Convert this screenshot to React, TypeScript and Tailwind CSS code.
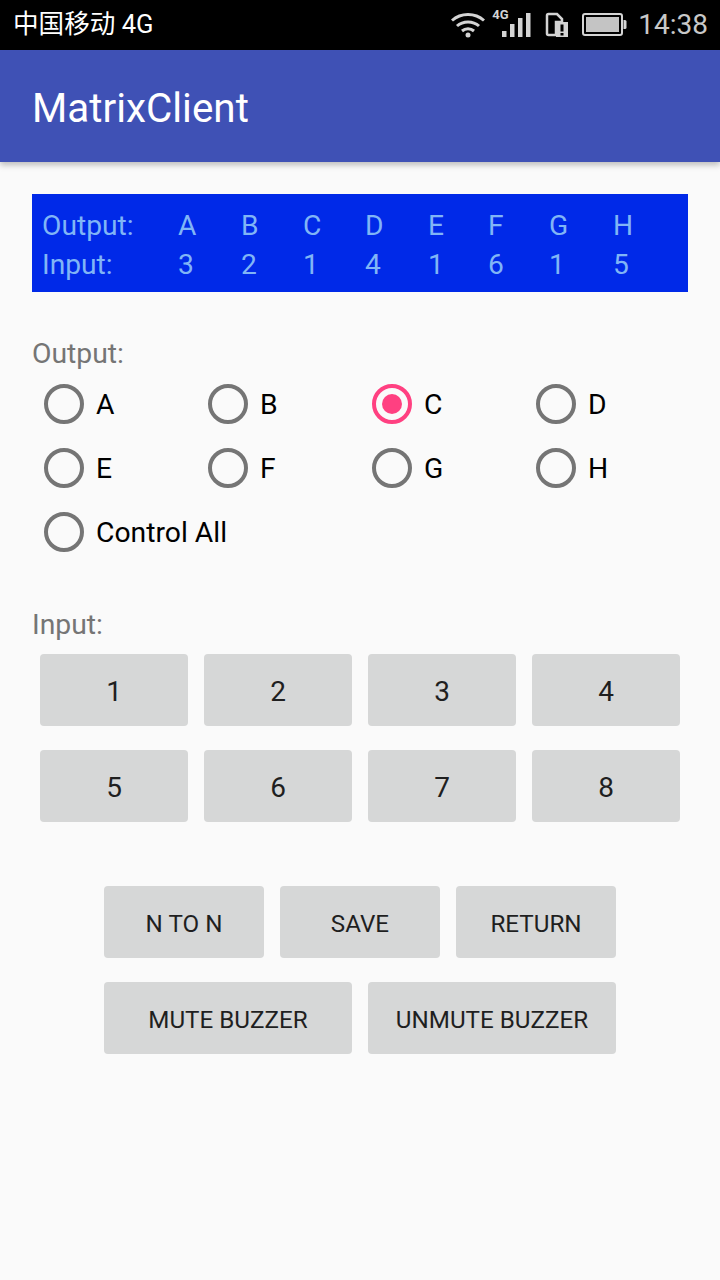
const font = { fontFamily: 'Roboto, "Noto Sans CJK SC", sans-serif' };

const columns = [
  ['A', '3', 'w-[63px]'],
  ['B', '2', 'w-[62px]'],
  ['C', '1', 'w-[62px]'],
  ['D', '4', 'w-[63px]'],
  ['E', '1', 'w-[60px]'],
  ['F', '6', 'w-[61px]'],
  ['G', '1', 'w-[64px]'],
  ['H', '5', 'w-[40px]'],
];

function Radio({ label, checked, className }: { label: string; checked?: boolean; className?: string }) {
  return (
    <div className={`flex h-16 items-center ${className ?? ''}`}>
      <div className="ml-1 flex h-[40px] w-[40px] items-center justify-center">
        <div className={`flex h-[40px] w-[40px] items-center justify-center rounded-full border-[4px] ${checked ? 'border-[#ff4081]' : 'border-[#757575]'}`}>
          {checked && <div className="h-[20px] w-[20px] rounded-full bg-[#ff4081]" />}
        </div>
      </div>
      <span className="ml-3 pt-[2px] text-[28.3px] leading-none text-black">{label}</span>
    </div>
  );
}

function Btn({ label, className }: { label: string; className: string }) {
  return (
    <div className={`flex h-[72px] items-center justify-center rounded-[4px] bg-[#d6d7d7] text-[#1f1f1f] ${className}`}>
      {label}
    </div>
  );
}

export default function App() {
  return (
    <div style={font} className="flex h-[1280px] w-[720px] flex-col overflow-hidden bg-[#fafafa]">
      <div className="flex h-[50px] items-center justify-between bg-black pl-[13px] pr-[12px] text-white">
        <span className="text-[25.6px] leading-none">中国移动 4G</span>
        <div className="flex items-center">
          <svg width="36" height="28" viewBox="0 0 36 28" fill="none" stroke="#d4d4d4" strokeWidth="3" className="mr-[6px]">
            <path d="M2 9.5C11 1.5 25 1.5 34 9.5" />
            <path d="M7 15C13 9.5 23 9.5 29 15" />
            <path d="M12 20C15.5 17 20.5 17 24 20" />
            <circle cx="18" cy="24" r="2.5" fill="#d4d4d4" stroke="none" />
          </svg>
          <div className="relative mr-[13px] h-[30px] w-[40px]">
            <span className="absolute left-0 top-[-2px] text-[13px] font-bold leading-none text-[#d4d4d4]">4G</span>
            <svg width="40" height="30" viewBox="0 0 40 30" fill="#d4d4d4" className="absolute left-0 top-0">
              <rect x="10" y="21" width="4.500" height="6" />
              <rect x="18" y="14" width="4.500" height="13" />
              <rect x="26" y="8" width="4.500" height="19" />
              <rect x="34" y="3" width="4.500" height="24" />
            </svg>
          </div>
          <svg width="24" height="26" viewBox="0 0 24 26" className="mr-[13px]">
            <path d="M2 3.500A1.500 1.500 0 0 1 3.500 2H12L17 7V10H11V23H3.500A1.500 1.500 0 0 1 2 21.500Z" fill="none" stroke="#d4d4d4" strokeWidth="2.500" />
            <path d="M11 10H23V25H11Z" fill="#d4d4d4" />
            <rect x="15.500" y="12.500" width="3" height="7" fill="#000" />
            <rect x="15.500" y="21" width="3" height="2.500" fill="#000" />
          </svg>
          <svg width="45" height="24" viewBox="0 0 45 24" className="mr-[11px]">
            <rect x="1" y="1" width="39" height="21" rx="2" fill="none" stroke="#d4d4d4" strokeWidth="2" />
            <rect x="4" y="4" width="33" height="15" fill="#c4c4c4" />
            <path d="M41.500 7H43A1.500 1.500 0 0 1 44.500 8.500V14.500A1.500 1.500 0 0 1 43 16H41.500Z" fill="#d4d4d4" />
          </svg>
          <span className="text-[28px] leading-none text-[#c8c8c8]">14:38</span>
        </div>
      </div>

      <div className="relative flex h-[112px] items-center bg-[#3f51b5] pl-[32px] pt-[7px] text-[40.4px] text-white shadow-[0_3px_6px_rgba(0,0,0,0.25)]">
        MatrixClient
      </div>

      <div className="mx-[32px] mt-[32px] flex h-[98px] flex-col justify-center bg-[#0029e8] pl-[10px] pt-[4px] text-[28.2px] leading-[39px] text-[#80b5f6]">
        <div className="flex">
          <span className="w-[136px]">Output:</span>
          {columns.map(([o, , w]) => (
            <span key={o} className={w}>{o}</span>
          ))}
        </div>
        <div className="flex">
          <span className="w-[136px]">Input:</span>
          {columns.map(([o, i, w]) => (
            <span key={o} className={w}>{i}</span>
          ))}
        </div>
      </div>

      <div className="ml-[32px] mt-[43px] text-[28.3px] leading-[37px] text-[#757575]">Output:</div>
      <div className="ml-[40px] grid w-[656px] grid-cols-4">
        <Radio label="A" />
        <Radio label="B" />
        <Radio label="C" checked />
        <Radio label="D" />
        <Radio label="E" />
        <Radio label="F" />
        <Radio label="G" />
        <Radio label="H" />
        <Radio label="Control All" className="col-span-4" />
      </div>

      <div className="ml-[32px] mt-[41px] text-[28.3px] leading-[40px] text-[#757575]">Input:</div>
      <div className="ml-[40px] mt-[9px] grid w-[640px] grid-cols-4 gap-x-4 gap-y-6 text-[28px]">
        {['1', '2', '3', '4', '5', '6', '7', '8'].map((n) => (
          <Btn key={n} label={n} className="w-[148px] pt-[4px]" />
        ))}
      </div>

      <div className="ml-[104px] mt-[64px] flex gap-4 text-[24.2px]">
        <Btn label="N TO N" className="w-[160px] pt-[4px]" />
        <Btn label="SAVE" className="w-[160px] pt-[4px]" />
        <Btn label="RETURN" className="w-[160px] pt-[4px]" />
      </div>
      <div className="ml-[104px] mt-6 flex gap-4 text-[24.2px]">
        <Btn label="MUTE BUZZER" className="w-[248px] pt-[4px]" />
        <Btn label="UNMUTE BUZZER" className="w-[248px] pt-[4px]" />
      </div>
    </div>
  );
}
